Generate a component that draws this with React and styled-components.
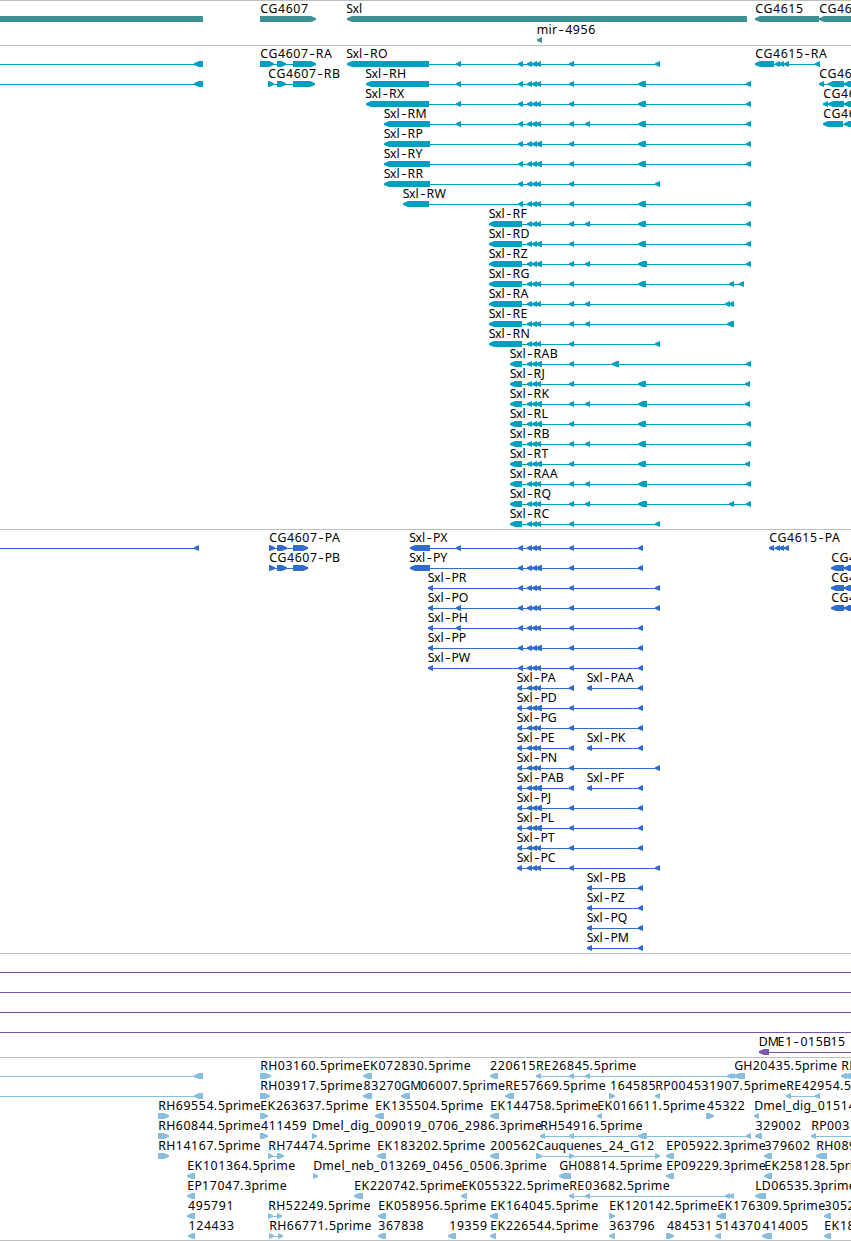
import React from 'react';
import styled, { createGlobalStyle } from 'styled-components';

const WIDTH = 851;

// horizontal advance of every character used in the labels
const advances = {
  '.': 3.8, '-': 7.6, _: 6.3,
  A: 8.1, B: 7, C: 8.4, D: 9, E: 7.3, F: 6.4, G: 9, H: 9.1, J: 4, K: 8, L: 6.6,
  M: 9.8, N: 9, O: 9, P: 7.2, Q: 9.2, R: 8.1, S: 6.4, T: 7.2, W: 10.4, X: 7.4, Y: 7.2, Z: 7.2,
  a: 6.8, d: 7.7, e: 7.4, g: 7.6, i: 3.5, l: 3.5, m: 11.9, n: 7.5, p: 7.8, q: 7.6,
  r: 5.1, s: 6, u: 7.5, b: 7.6, x: 6.3,
};

// f(label, label x, exons, options): one drawn feature
const f = (label, x, exons, opts = {}) => ({ label, x, exons, ...opts });
const right = { dir: 'right' };

const genes = [
  [
    f('', 0, [[0, 203]], { dir: 'none' }),
    f('CG4607', 260, [[260, 316]], right),
    f('Sxl', 346, [[347, 747]]),
    f('CG4615', 755, [[755, 819]]),
    f('CG46', 819, [[819, 860]]),
  ],
  [f('mir-4956', 536.5, [[537, 542]])],
];

const e458 = [456, 461];
const e520 = [518, 523];
const trio = [[527, 532], [532, 537], [536, 541]];
const trioWide = [[527, 532], [532, 537], [536, 542]];
const e571 = [569, 574];
const e587 = [585, 590];
const e642 = [638, 646];
const e642Wide = [638, 647];
const e657 = [655, 660];
const e748 = [746, 751];
const e747 = [745, 750];

const transcripts = [
  [
    f('', 0, [[194, 203]], { from: 0 }),
    f('CG4607-RA', 260, [[260, 274], [277, 286], [293, 316]], right),
    f('Sxl-RO', 346, [[347, 429], e458, e520, ...trio, e571, e657]),
    f('CG4615-RA', 755, [[755, 774], [775, 780], [779, 784], [784, 789], [815, 820]]),
  ],
  [
    f('', 0, [[194, 203]], { from: 0 }),
    f('CG4607-RB', 268, [[268, 274], [277, 286], [293, 315]], right),
    f('Sxl-RH', 365, [[366, 429], e458, e520, ...trio, e571, e642, e748]),
    f('CG46', 819, [[819, 824], [828, 844], [844, 856]]),
  ],
  [
    f('Sxl-RX', 365, [[366, 429], e458, e520, ...trio, e571, e642, e748]),
    f('CG46', 823, [[823, 828], [828, 844], [844, 856]]),
  ],
  [
    f('Sxl-RM', 383.5, [[384, 430], e458, e520, ...trio, e571, e587, e642, e748]),
    f('CG46', 823, [[823, 843], [844, 856]]),
  ],
  [f('Sxl-RP', 383.5, [[384, 430], e520, ...trioWide, e571, e642, e748])],
  [f('Sxl-RY', 383.5, [[384, 430], e520, ...trioWide, e571, e642, e748])],
  [f('Sxl-RR', 383.5, [[384, 430], e520, ...trio, e571, e657])],
  [f('Sxl-RW', 402.5, [[403, 429], e520, ...trio, e571, e642, e748])],
  [f('Sxl-RF', 488.5, [[489, 522], ...trio, e571, e587, e642, e748])],
  [f('Sxl-RD', 488.5, [[489, 522], ...trioWide, e571, e642, e748])],
  [f('Sxl-RZ', 488.5, [[489, 522], ...trioWide, e571, e587, e642Wide, e748])],
  [f('Sxl-RG', 488.5, [[489, 522], ...trio, e571, e642, [729, 734], [739, 744]])],
  [f('Sxl-RA', 488.5, [[489, 522], ...trio, e571, e587, [725, 730], [729, 734]])],
  [f('Sxl-RE', 488.5, [[489, 522], ...trio, e571, e587, [727, 734]])],
  [f('Sxl-RN', 488.5, [[489, 522], ...trio, e571, e657])],
  [f('Sxl-RAB', 509.5, [[510, 522], ...trioWide, e571, [612, 619], e748])],
  [f('Sxl-RJ', 509.5, [[510, 522], ...trio, e571, e642, e747])],
  [f('Sxl-RK', 509.5, [[510, 522], ...trioWide, e571, e587, e642Wide, e747])],
  [f('Sxl-RL', 509.5, [[510, 522], ...trioWide, e571, e642, e748])],
  [f('Sxl-RB', 509.5, [[510, 522], ...trio, e571, e587, e642, e748])],
  [f('Sxl-RT', 509.5, [[510, 522], ...trioWide, e571, e642, e747])],
  [f('Sxl-RAA', 509.5, [[510, 522], ...trio, e571, e587, e642Wide, e748])],
  [f('Sxl-RQ', 509.5, [[510, 522], ...trio, e571, e587, e642Wide, [729, 734], e748])],
  [f('Sxl-RC', 509.5, [[510, 522], ...trio, e571, e657])],
];

const p428 = [428, 433];
const p517 = [517, 522];
const p587 = [587, 592];
const p642 = [638, 643];
const pRight = [[831, 844], [844, 856]];

const proteins = [
  [
    f('', 0, [[194, 199]], { from: 0 }),
    f('CG4607-PA', 269, [[269, 275], [277, 287], [293, 308]], right),
    f('Sxl-PX', 409, [[410, 430], e458, e520, ...trio, e571, p642]),
    f('CG4615-PA', 769, [[769, 774], [775, 780], [779, 784], [784, 789]]),
  ],
  [
    f('CG4607-PB', 269, [[269, 275], [277, 287], [293, 308]], right),
    f('Sxl-PY', 409, [[410, 430], e520, ...trioWide, e571, p642]),
    f('CG4', 831, pRight),
  ],
  [f('Sxl-PR', 427.5, [p428, e520, ...trio, e571, e657]), f('CG4', 831, pRight)],
  [f('Sxl-PO', 427.5, [p428, e458, e520, ...trio, e571, e657]), f('CG4', 831, pRight)],
  [f('Sxl-PH', 427.5, [p428, e458, e520, ...trio, e571, p642])],
  [f('Sxl-PP', 427.5, [p428, e520, ...trioWide, e571, p642])],
  [f('Sxl-PW', 427.5, [p428, e520, ...trio, e571, p642])],
  [f('Sxl-PA', 516.5, [p517, ...trio, e571]), f('Sxl-PAA', 586.5, [p587, p642])],
  [f('Sxl-PD', 516.5, [p517, ...trioWide, e571, p642])],
  [f('Sxl-PG', 516.5, [p517, ...trio, e571, p642])],
  [f('Sxl-PE', 516.5, [p517, ...trio, e571]), f('Sxl-PK', 586.5, [p587, p642])],
  [f('Sxl-PN', 516.5, [p517, ...trio, e571, e657])],
  [f('Sxl-PAB', 516.5, [p517, ...trioWide, e571]), f('Sxl-PF', 586.5, [p587, p642])],
  [f('Sxl-PJ', 516.5, [p517, ...trioWide, e571, p642])],
  [f('Sxl-PL', 516.5, [p517, ...trioWide, e571, p642])],
  [f('Sxl-PT', 516.5, [p517, ...trio, e571, p642])],
  [f('Sxl-PC', 516.5, [p517, ...trio, e571, e657])],
  [f('Sxl-PB', 586.5, [p587, p642])],
  [f('Sxl-PZ', 586.5, [p587, p642])],
  [f('Sxl-PQ', 586.5, [p587, p642])],
  [f('Sxl-PM', 586.5, [p587, p642])],
];

const fullLine = f('', 0, [], { from: 0, to: WIDTH });

const clones = [
  [fullLine],
  [fullLine],
  [fullLine],
  [fullLine],
  [f('DME1-015B15', 758.5, [[759, 769]], { to: WIDTH })],
];

const ests = [
  [
    f('', 0, [[194, 203]], { from: 0 }),
    f('RH03160.5prime', 260, [[260, 271]], right),
    f('EK072830.5prime', 362.5, [[363, 372]]),
    f('220615', 489.5, [[490, 498]]),
    f('RE26845.5prime', 535.7, [[536, 541], [569, 574], [585, 590], [727, 732], [730, 735]]),
    f('GH20435.5prime', 734, [[734, 745]]),
    f('RE', 841, [[841, 847], [845, 856]]),
  ],
  [
    f('', 0, [[194, 203]], { from: 0 }),
    f('RH03917.5prime', 260, [[260, 270]], right),
    f('83270', 363, [[363, 372]]),
    f('GM06007.5prime', 401, [[401, 410]]),
    f('RE57669.5prime', 505, [[505, 514]]),
    f('164585', 609.5, [[609, 615]], right),
    f('RP004531907.5prime', 655, [[655, 660]]),
    f('RE42954.5', 786, [[786, 791], [815, 820]]),
  ],
  [
    f('RH69554.5prime', 158, [[158, 169]], right),
    f('EK263637.5prime', 260, [[260, 268]], right),
    f('EK135504.5prime', 375, [[375, 384]]),
    f('EK144758.5prime', 490, [[490, 499]]),
    f('EK016611.5prime', 597, [[597, 602]]),
    f('45322', 706.5, [[706, 714]], right),
    f('Dmel_dig_01514', 754, [[754, 759]]),
  ],
  [
    f('RH60844.5prime', 158, [[158, 169]], right),
    f('411459', 260.5, [[260, 268]], right),
    f('Dmel_dig_009019_0706_2986.3prime', 312, [[312, 317]], right),
    f('RH54916.5prime', 540, [[540, 545], [569, 574], [638, 647], [746, 751]]),
    f('329002', 755, [[755, 762]]),
    f('RP003', 811, [[811, 816]], { to: WIDTH }),
  ],
  [
    f('RH14167.5prime', 158, [[158, 169]], right),
    f('RH74474.5prime', 268, [[268, 273], [277, 284]], right),
    f('EK183202.5prime', 377, [[377, 386]]),
    f('200562', 489.7, [[490, 499]]),
    f('Cauquenes_24_G12', 535.7, [[536, 542], [569, 574], [655, 660]], right),
    f('EP05922.3prime', 666, [[666, 674]]),
    f('379602', 764, [[764, 772]]),
    f('RH089', 816, [[816, 827]]),
  ],
  [
    f('EK101364.5prime', 187, [[187, 195]]),
    f('Dmel_neb_013269_0456_0506.3prime', 313, [[313, 318]], right),
    f('GH08814.5prime', 559, [[559, 571]]),
    f('EP09229.3prime', 666, [[666, 674]]),
    f('EK258128.5prime', 764, [[764, 772]]),
  ],
  [
    f('EP17047.3prime', 187, [[187, 195]]),
    f('EK220742.5prime', 354, [[354, 363]]),
    f('EK055322.5prime', 461, [[461, 467]]),
    f('RE03682.5prime', 569, [[569, 574], [585, 590], [725, 730], [729, 734]]),
    f('LD06535.3prime', 755, [[755, 766]]),
  ],
  [
    f('495791', 187.5, [[187, 195]]),
    f('RH52249.5prime', 268, [[268, 273], [277, 282]], right),
    f('EK058956.5prime', 378, [[378, 386]]),
    f('EK164045.5prime', 490, [[490, 498]]),
    f('EK120142.5prime', 609, [[609, 615]], right),
    f('EK176309.5prime', 717, [[717, 726]]),
    f('3052', 824, [[824, 831]]),
  ],
  [
    f('124433', 188, [[188, 195]]),
    f('RH66771.5prime', 269, [[269, 274], [278, 283]], right),
    f('367838', 377.7, [[378, 386]]),
    f('19359', 448.7, [[448, 456]]),
    f('EK226544.5prime', 490, [[490, 496]]),
    f('363796', 608.7, [[609, 615]]),
    f('484531', 666.3, [[666, 674]], right),
    f('514370', 714.8, [[715, 721]]),
    f('414005', 762, [[762, 772]]),
    f('EK18', 824, [[824, 831]]),
  ],
];

const tracks = [
  { name: 'genes', color: '#408f94', pitch: 21, rows: genes },
  { name: 'transcripts', color: '#009fbf', rows: transcripts },
  { name: 'proteins', color: '#306ccc', rows: proteins },
  { name: 'clones', color: '#7755a8', rows: clones },
  { name: 'ests', color: '#89bddd', rows: ests, pad: 2 },
];

// digits are narrower than their advance, so they sit a little to the right
const charPositions = (label, start) => {
  let x = start + 0.2;
  return label.split('').map((c) => {
    const at = x + (/\d/.test(c) ? 0.4 : 0);
    x += advances[c] || 7.66;
    return Number(at.toFixed(2));
  });
};

const exonPoints = ([a, b], dir) => {
  const head = Math.min(5, b - a);
  if (dir === 'none') return `${a},15 ${b},15 ${b},21 ${a},21`;
  if (dir === 'right') {
    return `${a},15 ${b - head},15 ${b},17.3 ${b},19 ${b - head},21 ${a},21`;
  }
  return `${b},15 ${a + head},15 ${a},17.3 ${a},19 ${a + head},21 ${b},21`;
};

const FeatureLabel = ({ label, x }) => {
  const xs = charPositions(label, x);
  const dash = label.indexOf('-');
  if (dash < 0) {
    return (
      <Label x={xs.join(' ')} y="12">
        {label}
      </Label>
    );
  }
  return (
    <Label y="12">
      <tspan x={xs.slice(0, dash).join(' ')}>{label.slice(0, dash)}</tspan>
      <Dash x={xs[dash] + 1.1}>-</Dash>
      <tspan x={xs.slice(dash + 1).join(' ')}>{label.slice(dash + 1)}</tspan>
    </Label>
  );
};

const Feature = ({ label, x, exons, dir = 'left', from, to }) => {
  const start = from ?? exons[0][0];
  const end = to ?? exons[exons.length - 1][1];
  return (
    <g>
      {(exons.length !== 1 || from !== undefined || to !== undefined) && (
        <rect x={start} y="18" width={end - start} height="1" />
      )}
      {exons.map((exon) => (
        <polygon key={exon[0]} points={exonPoints(exon, dir)} />
      ))}
      {label && <FeatureLabel label={label} x={x} />}
    </g>
  );
};

const App = () => {
  return (
    <Browser>
      <GlobalStyle />
      {tracks.map(({ name, color, pitch, rows, pad }) => (
        <Track key={name} $pad={pad}>
          {rows.map((row, i) => (
            <Row key={i} $color={color} $height={i === 0 ? pitch : undefined}>
              {row.map((feature, j) => (
                <Feature key={j} {...feature} />
              ))}
            </Row>
          ))}
        </Track>
      ))}
    </Browser>
  );
};

const GlobalStyle = createGlobalStyle`
  body {
    margin: 0;
    background: #fff;
  }
`;

const Browser = styled.main`
  display: flex;
  flex-direction: column;
  width: ${WIDTH}px;
  overflow: hidden;
  border-bottom: 1px solid #bebebe;
`;

const Track = styled.section`
  display: flex;
  flex-direction: column;
  border-top: 1px solid #bebebe;
  padding-bottom: ${({ $pad = 3 }) => $pad}px;
`;

const Row = styled.svg`
  display: block;
  width: ${WIDTH}px;
  height: ${({ $height = 20 }) => $height}px;
  fill: ${({ $color }) => $color};
  overflow: visible;
`;

const Label = styled.text`
  font-family: 'Noto Sans', 'Open Sans', sans-serif;
  font-size: 12.3px;
  fill: #000;
`;

const Dash = styled.tspan`
  font-family: Inter, 'Noto Sans', sans-serif;
`;

export default App;
